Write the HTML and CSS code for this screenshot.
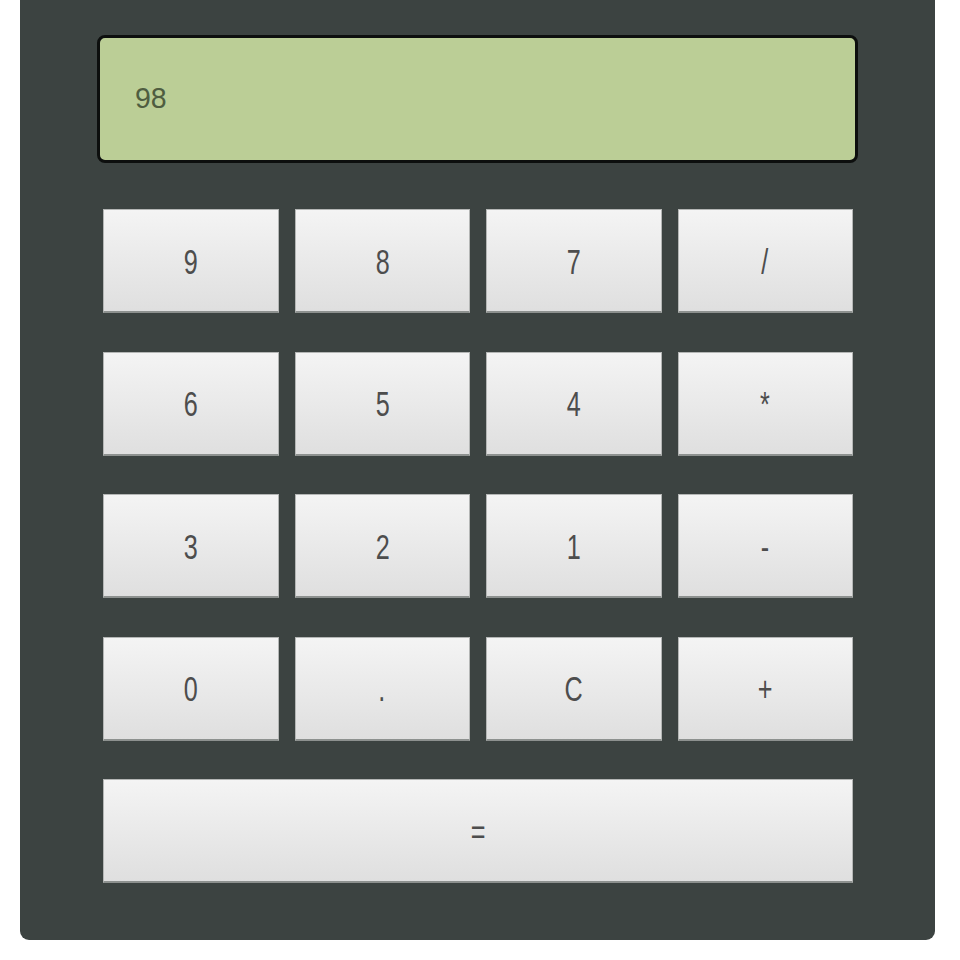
FILE: index.html
```html
<!DOCTYPE html>
<html>
<head>
<meta charset="utf-8">
<link rel="stylesheet" href="styles.css">
</head>
<body>
<div class="calc">
  <div class="display"><span class="value">98</span></div>
  <div class="keys">
    <button class="key"><span>9</span></button>
    <button class="key"><span>8</span></button>
    <button class="key"><span>7</span></button>
    <button class="key"><span>/</span></button>
    <button class="key"><span>6</span></button>
    <button class="key"><span>5</span></button>
    <button class="key"><span>4</span></button>
    <button class="key"><span>*</span></button>
    <button class="key"><span>3</span></button>
    <button class="key"><span>2</span></button>
    <button class="key"><span>1</span></button>
    <button class="key"><span>-</span></button>
    <button class="key"><span>0</span></button>
    <button class="key"><span>.</span></button>
    <button class="key"><span>C</span></button>
    <button class="key"><span>+</span></button>
    <button class="key wide"><span>=</span></button>
  </div>
</div>
</body>
</html>
```
FILE: styles.css
```css
html, body {
  margin: 0;
  padding: 0;
  background: #ffffff;
}
.calc {
  box-sizing: border-box;
  margin-left: 20px;
  width: 915px;
  height: 940px;
  padding: 35px 77px 57px 77px;
  background: #3c4341;
  border-radius: 0 0 9px 9px;
  font-family: "Liberation Sans", Arial, sans-serif;
}
.display {
  box-sizing: border-box;
  height: 128px;
  border: 3px solid #0d0f0e;
  border-radius: 8px;
  background: #bbce96;
  display: flex;
  align-items: center;
  padding-left: 35px;
}
.value {
  font-size: 30px;
  color: #4f5d40;
  margin-top: -2px;
  display: inline-block;
  transform: scaleX(0.95);
  transform-origin: left center;
}
.keys {
  margin: 46px 5px 0 6px;
  display: grid;
  grid-template-columns: repeat(4, 1fr);
  grid-auto-rows: 104px;
  column-gap: 16px;
  row-gap: 38.5px;
}
.key {
  box-sizing: border-box;
  border: 1px solid #b4b6b5;
  border-bottom: 2px solid #8d918f;
  background: linear-gradient(#f4f4f4, #dfdfdf);
  font-family: "Liberation Sans", Arial, sans-serif;
  font-size: 35px;
  color: #4d4d4d;
  padding: 0 0 0 0;
  margin: 0;
  display: flex;
  align-items: center;
  justify-content: center;
}
.key span {
  display: inline-block;
  transform: scaleX(0.72);
  margin-top: 2px;
}
.wide {
  grid-column: 1 / -1;
}
```
